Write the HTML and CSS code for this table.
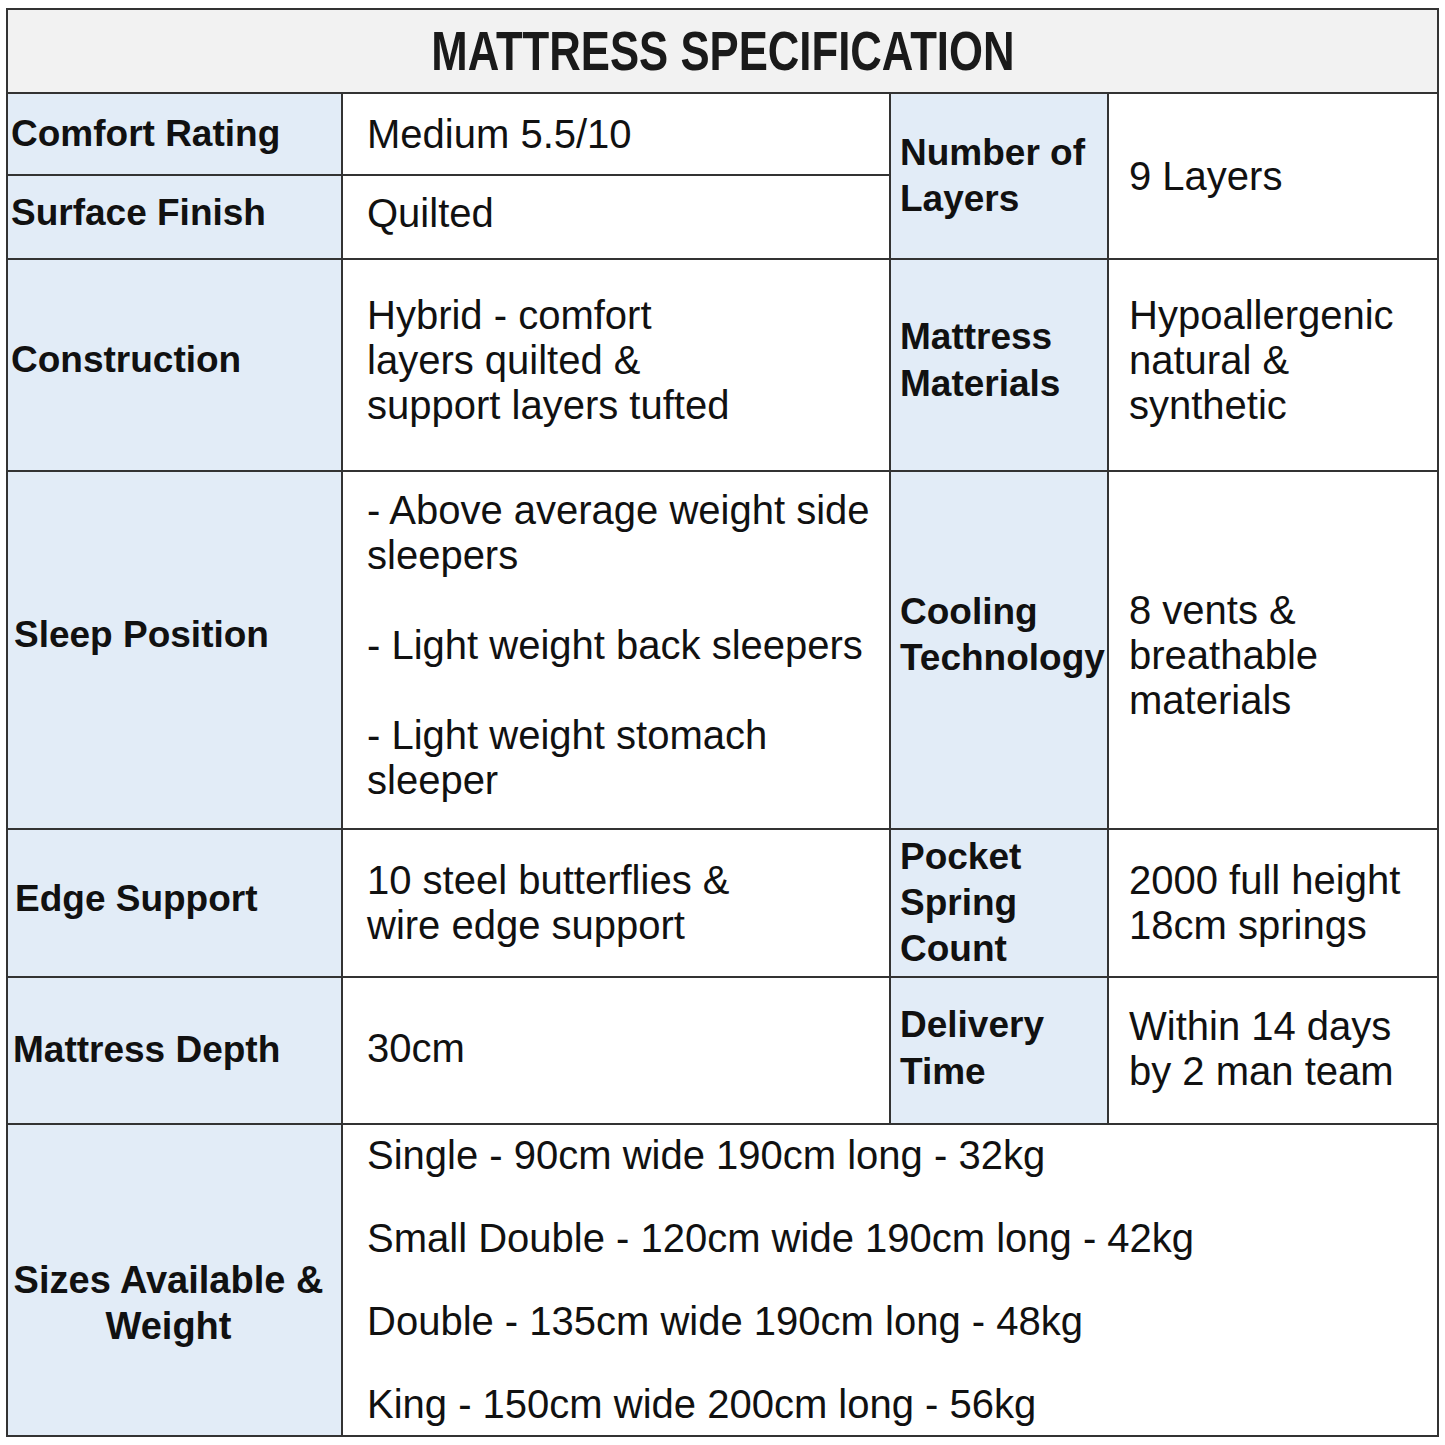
FILE: index.html
```html
<!DOCTYPE html>
<html>
<head>
<meta charset="utf-8">
<link rel="stylesheet" href="styles.css">
</head>
<body>
<div class="page">
<table class="spec">
  <colgroup>
    <col class="c1"><col class="c2"><col class="c3"><col class="c4">
  </colgroup>
  <tr class="r-title">
    <th colspan="4" class="title"><span>MATTRESS SPECIFICATION</span></th>
  </tr>
  <tr class="r-comfort">
    <td class="lbl">Comfort Rating</td>
    <td class="val">Medium 5.5/10</td>
    <td class="lbl lbl2" rowspan="2">Number of<br>Layers</td>
    <td class="val val2" rowspan="2">9 Layers</td>
  </tr>
  <tr class="r-surface">
    <td class="lbl">Surface Finish</td>
    <td class="val">Quilted</td>
  </tr>
  <tr class="r-construction">
    <td class="lbl">Construction</td>
    <td class="val">Hybrid - comfort<br>layers quilted &amp;<br>support layers tufted</td>
    <td class="lbl lbl2">Mattress<br>Materials</td>
    <td class="val val2">Hypoallergenic<br>natural &amp;<br>synthetic</td>
  </tr>
  <tr class="r-sleep">
    <td class="lbl lbl-sleep">Sleep Position</td>
    <td class="val val-sleep">
      <p class="para">- Above average weight side<br>sleepers</p>
      <p class="para">- Light weight back sleepers</p>
      <p class="para">- Light weight stomach<br>sleeper</p>
    </td>
    <td class="lbl lbl2 lbl-cool">Cooling<br>Technology</td>
    <td class="val val2 val-vents">8 vents &amp;<br>breathable<br>materials</td>
  </tr>
  <tr class="r-edge">
    <td class="lbl lbl-edge">Edge Support</td>
    <td class="val">10 steel butterflies &amp;<br>wire edge support</td>
    <td class="lbl lbl2 lbl-pocket">Pocket<br>Spring<br>Count</td>
    <td class="val val2">2000 full height<br>18cm springs</td>
  </tr>
  <tr class="r-depth">
    <td class="lbl lbl-depth">Mattress Depth</td>
    <td class="val">30cm</td>
    <td class="lbl lbl2">Delivery<br>Time</td>
    <td class="val val2">Within 14 days<br>by 2 man team</td>
  </tr>
  <tr class="r-sizes">
    <td class="lbl lbl-center">Sizes Available &amp;<br>Weight</td>
    <td class="val sizes" colspan="3">
      <div class="size">Single - 90cm wide 190cm long - 32kg</div>
      <div class="size">Small Double - 120cm wide 190cm long - 42kg</div>
      <div class="size">Double - 135cm wide 190cm long - 48kg</div>
      <div class="size">King - 150cm wide 200cm long - 56kg</div>
    </td>
  </tr>
</table>
</div>
</body>
</html>
```

FILE: styles.css
```css
html, body {
  margin: 0;
  padding: 0;
  background: #ffffff;
}
.page {
  padding: 8px 8px 0 6px;
}
.spec {
  width: 1431px;
  table-layout: fixed;
  border-collapse: collapse;
  font-family: "Liberation Sans", Arial, sans-serif;
  color: #111;
  border: 2px solid #333;
}
.c1 { width: 335px; }
.c2 { width: 548px; }
.c3 { width: 218px; }
.c4 { width: 330px; }
.spec td, .spec th {
  border: 2px solid #333;
  padding: 0;
  vertical-align: middle;
}
.title {
  background: #f2f2f2;
  height: 82px;
  text-align: center;
  font-weight: bold;
  font-size: 56px;
  line-height: 60px;
}
.title span {
  display: inline-block;
  transform: scaleX(0.78);
  color: #1a1a1a;
}
.lbl {
  background: #e2ecf7;
  font-weight: bold;
  font-size: 37px;
  line-height: 46.5px;
  padding-left: 3px !important;
}
.lbl2 {
  padding-left: 9px !important;
}
.lbl-sleep {
  padding-left: 6px !important;
  padding-bottom: 30px !important;
}
.lbl-cool {
  padding-bottom: 30px !important;
}
.lbl-edge {
  padding-left: 7px !important;
}
.lbl-pocket {
  line-height: 46px;
}
.lbl-depth {
  padding-left: 5px !important;
}
.lbl-center {
  text-align: center;
  font-size: 38px;
  padding-left: 0 !important;
  padding-right: 12px !important;
  padding-top: 46px !important;
}
.val {
  font-size: 40px;
  line-height: 45px;
  padding-left: 24px !important;
}
.val2 {
  padding-left: 20px !important;
}
.val-sleep {
  padding-bottom: 10px !important;
}
.val-vents {
  padding-top: 10px !important;
}
.para {
  margin: 0 0 45px 0;
}
.para:last-child {
  margin-bottom: 0;
}
.r-comfort { height: 82px; }
.r-surface { height: 84px; }
.r-surface td { padding-bottom: 8px; }
.r-construction { height: 212px; }
.r-construction td { padding-bottom: 9px; }
.r-sleep { height: 358px; }
.r-edge { height: 148px; }
.r-edge td.lbl-edge { padding-bottom: 8px; }
.r-depth { height: 147px; }
.r-depth td { padding-bottom: 4px; }
.r-depth td.lbl-depth { padding-bottom: 0; }
.r-sizes { height: 312px; }
.sizes .size {
  line-height: 45px;
  margin-bottom: 37.7px;
}
.sizes .size:last-child {
  margin-bottom: 0;
}
```
